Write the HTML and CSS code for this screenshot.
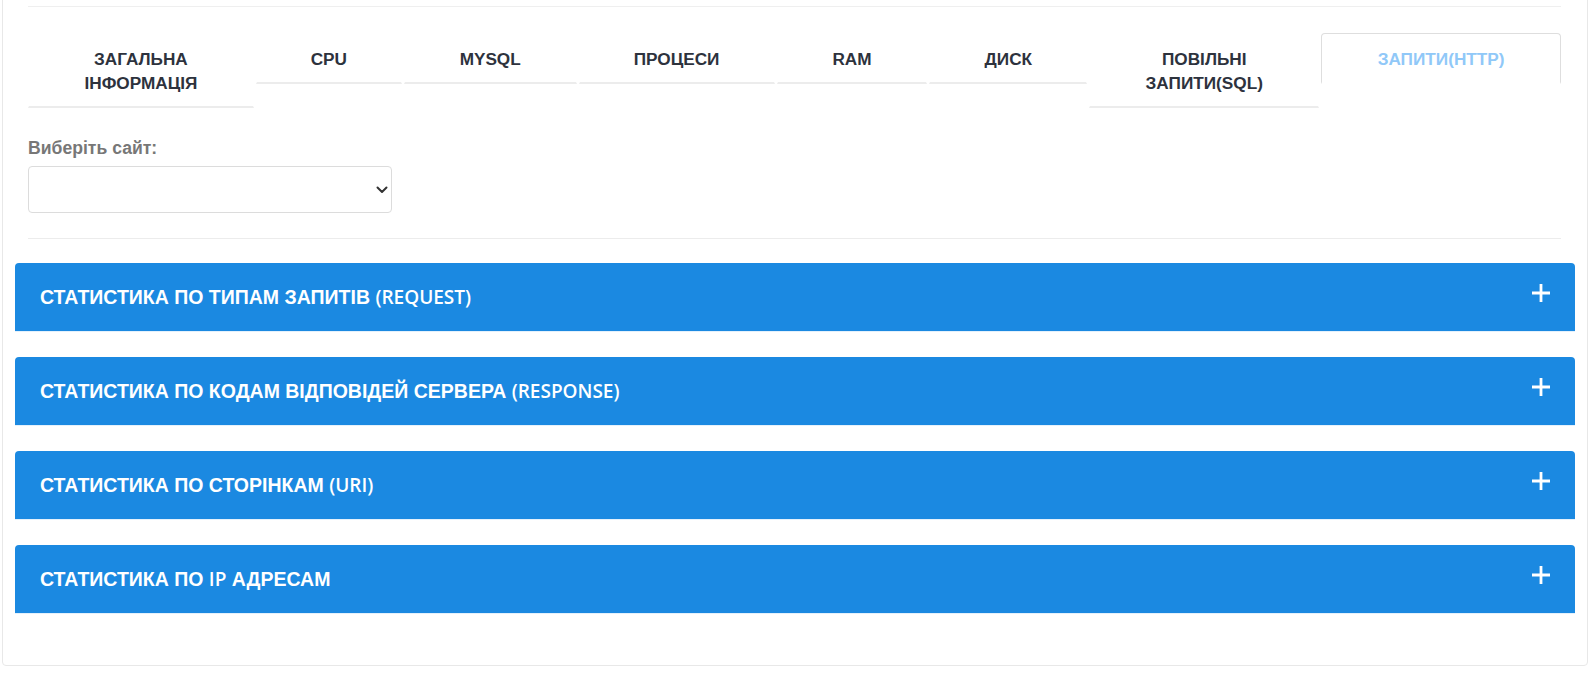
FILE: index.html
```html
<!DOCTYPE html>
<html lang="uk">
<head>
<meta charset="utf-8">
<title>Моніторинг сервера — Запити (HTTP)</title>
<link rel="stylesheet" href="styles.css">
</head>
<body>
<div class="card">
  <div class="card-head">
    <ul class="tabs">
      <li class="tab tab-general"><a>ЗАГАЛЬНА<br>ІНФОРМАЦІЯ</a></li>
      <li class="tab tab-cpu"><a>CPU</a></li>
      <li class="tab tab-mysql"><a>MYSQL</a></li>
      <li class="tab tab-proc"><a>ПРОЦЕСИ</a></li>
      <li class="tab tab-ram"><a>RAM</a></li>
      <li class="tab tab-disk"><a>ДИСК</a></li>
      <li class="tab tab-slow"><a>ПОВІЛЬНІ<br>ЗАПИТИ(SQL)</a></li>
      <li class="tab tab-http is-active"><a>ЗАПИТИ(HTTP)</a></li>
    </ul>

    <div class="site-picker">
      <label class="site-label" for="site">Виберіть сайт:</label>
      <div class="select-wrap">
        <select id="site" class="site-select"></select>
        <svg class="select-caret" width="12" height="8" viewBox="0 0 12 8" aria-hidden="true">
          <path d="M1.5 1.5 L6 6 L10.5 1.5" fill="none" stroke="#333" stroke-width="2" stroke-linecap="round" stroke-linejoin="round"/>
        </svg>
      </div>
    </div>
  </div>

  <div class="panel">
    <h3 class="panel-title">СТАТИСТИКА ПО ТИПАМ ЗАПИТІВ <span class="latin">(REQUEST)</span></h3>
    <svg class="panel-plus" width="20" height="20" viewBox="0 0 20 20" aria-hidden="true"><path d="M10 1 V19 M1 10 H19" stroke="#fff" stroke-width="2.8"/></svg>
  </div>
  <div class="panel">
    <h3 class="panel-title">СТАТИСТИКА ПО КОДАМ ВІДПОВІДЕЙ СЕРВЕРА <span class="latin">(RESPONSE)</span></h3>
    <svg class="panel-plus" width="20" height="20" viewBox="0 0 20 20" aria-hidden="true"><path d="M10 1 V19 M1 10 H19" stroke="#fff" stroke-width="2.8"/></svg>
  </div>
  <div class="panel">
    <h3 class="panel-title">СТАТИСТИКА ПО СТОРІНКАМ <span class="latin">(URI)</span></h3>
    <svg class="panel-plus" width="20" height="20" viewBox="0 0 20 20" aria-hidden="true"><path d="M10 1 V19 M1 10 H19" stroke="#fff" stroke-width="2.8"/></svg>
  </div>
  <div class="panel">
    <h3 class="panel-title">СТАТИСТИКА ПО <span class="latin">IP</span> АДРЕСАМ</h3>
    <svg class="panel-plus" width="20" height="20" viewBox="0 0 20 20" aria-hidden="true"><path d="M10 1 V19 M1 10 H19" stroke="#fff" stroke-width="2.8"/></svg>
  </div>
</div>
</body>
</html>
```

FILE: styles.css
```css
* { box-sizing: border-box; }

html, body {
  margin: 0;
  background: #fff;
  font-family: "Liberation Sans", Arial, sans-serif;
  overflow: hidden;
}

/* outer card, its top edge sits above the fold */
.card {
  margin: -20px 5px 0 2px;
  padding: 25px 12px 26px;
  border: 1px solid #e8e8e8;
  border-radius: 4px;
}

.card-head {
  margin: 0 14px 24px 13px;
  padding: 26px 0 25px;
  border-top: 1px solid #efefef;
  border-bottom: 1px solid #ececec;
}

/* tab strip */
.tabs {
  display: flex;
  align-items: flex-start;
  gap: 2px;
  margin: 0;
  padding: 0;
  list-style: none;
}

.tab { flex: 1 1 0; min-width: 0; }
.tab-general { flex-grow: 226; }
.tab-cpu     { flex-grow: 146; }
.tab-mysql   { flex-grow: 173; }
.tab-proc    { flex-grow: 196; }
.tab-ram     { flex-grow: 151; }
.tab-disk    { flex-grow: 158; }
.tab-slow    { flex-grow: 230; }
.tab-http    { flex-grow: 240; }

.tab a {
  display: block;
  padding: 13px 8px 11px;
  border: 1px solid transparent;
  border-bottom: 2px solid #ececec;
  border-radius: 4px 4px 0 0;
  font-size: 17.2px;
  font-weight: 700;
  line-height: 24px;
  text-align: center;
  color: #2d323d;
  cursor: pointer;
}

.tab.is-active a {
  border-color: #dedede #dedede transparent;
  border-bottom-color: transparent;
  color: #90c8f8;
}

/* site selector */
.site-picker { margin-top: 28px; }

.site-label {
  display: block;
  margin-bottom: 6px;
  font-size: 17.6px;
  font-weight: 700;
  line-height: 24px;
  color: #777;
}

.select-wrap {
  position: relative;
  width: 364px;
}

.site-select {
  display: block;
  width: 100%;
  height: 47px;
  margin: 0;
  border: 1px solid #dcdcdc;
  border-radius: 4px;
  background: #fff;
  appearance: none;
  -webkit-appearance: none;
}

.select-caret {
  position: absolute;
  right: 4px;
  top: 20px;
}

/* collapsible statistic panels */
.panel {
  display: flex;
  align-items: center;
  justify-content: space-between;
  height: 68px;
  margin-bottom: 26px;
  padding: 0 24px 0 25px;
  background: #1b89e1;
  border-radius: 4px 4px 0 0;
  box-shadow: 0 1px 0 #e4f1fc;
}

.panel-title {
  margin: 0;
  font-size: 19.5px;
  font-weight: 700;
  line-height: 24px;
  color: #fff;
}

.panel-title .latin {
  font-family: "Open Sans", "Liberation Sans", sans-serif;
  font-weight: 600;
  font-size: 19px;
}

.panel-plus {
  margin-bottom: 8px;
  flex: none;
}
```
